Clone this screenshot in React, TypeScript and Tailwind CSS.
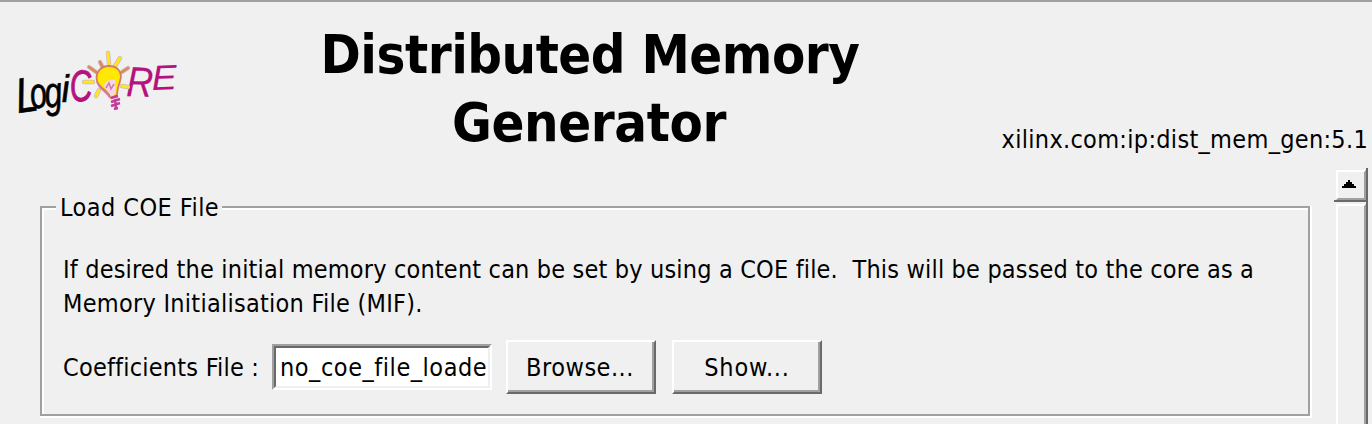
function Logo() {
  return (
    <svg className="block h-[84px] w-[176px]" viewBox="10 44 176 84" role="img" aria-label="LogiCORE">
      <g fontFamily="'Liberation Sans Narrow', 'Liberation Sans', sans-serif" fontStyle="italic">
        <g fill="#000" stroke="#000" strokeWidth=".7">
          <text transform="translate(18 113) rotate(-8) scale(.8 1)" fontSize="49">L</text>
          <text transform="translate(32 109) rotate(-9) scale(.7 1)" fontSize="43">o</text>
          <text transform="translate(46 108) rotate(-7) scale(.74 1)" fontSize="43">g</text>
          <text transform="translate(62 102) rotate(-3) scale(.95 1)" fontSize="38">i</text>
        </g>
        <g fill="#b5127f" stroke="#b5127f">
          <text transform="translate(71 102) rotate(-5) scale(.7 1)" fontSize="44" strokeWidth=".9">C</text>
          <text transform="translate(126 96) rotate(2) scale(.88 1)" fontSize="42" strokeWidth=".2">R</text>
          <text transform="translate(152 90) rotate(-2) scale(1.08 1)" fontSize="35" strokeWidth="0">E</text>
        </g>
      </g>
      <g fill="none" stroke="#cdb9c4" strokeWidth="4.4" strokeLinecap="round">
        <path d="M108 53l1 11M120 58l-5 8M100 62l3 6M89 67l7 5M84 82h9M96 96l3-6M128 68l-6 4M122 86l6 1" />
      </g>
      <g fill="none" stroke="#ffe51a" strokeWidth="3" strokeLinecap="round">
        <path d="M108 53l1 11M120 58l-5 8M84 82h9M96 96l3-6M122 86l6 1" />
        <path d="M100 62l3 6M89 67l7 5M128 68l-6 4" stroke="#dc8a50" strokeWidth="2.4" />
      </g>
      <path d="M97 81c-2-9 4-15 12-15 9 0 14 7 11 15-1 5-3 7-3 14l-6 3c-2-8-12-9-14-17z" fill="#ffe900" stroke="#d97a60" strokeWidth="1.8" />
      <path d="M104 86c1-5 6-7 11-6l1 13-5 4c-1-4-5-6-7-11z" fill="#f5d5e6" />
      <path d="M97 82c2 7 9 9 13 16M106 88l3-5 2 6 3-5" fill="none" stroke="#cf79af" strokeWidth="1.5" />
      <path d="M111 98l7-2M111 102l9-3M111 106l9-3M114 109l4-1M115 99l1 9" stroke="#c23d95" strokeWidth="2.4" fill="none" />
    </svg>
  );
}

function PushButton({ label, text }: { label: string; text: string }) {
  return (
    <button className="h-[54px] w-[150px] border-2 border-t-white border-r-[#696969] border-b-[#696969] border-l-white">
      <span className="flex h-full items-center justify-center border-r-2 border-b-2 border-[#a0a0a0] pt-[3px]">
        <span className={text}>{label}</span>
      </span>
    </button>
  );
}

function ScrollBar() {
  return (
    <div className="flex h-[256px] w-[34px] shrink-0 flex-col">
      <div className="h-[34px] border-r-2 border-b-2 border-[#696969] pt-[2px] pl-[2px]">
        <div className="flex h-full justify-center border-2 border-t-white border-r-[#a0a0a0] border-b-[#a0a0a0] border-l-white pt-[8px] pr-[4px]">
          <svg className="h-[8px] w-[14px] shrink-0" viewBox="0 0 14 8" shapeRendering="crispEdges">
            <path d="M6 0h2v2h2v2h2v2h2v2H0V6h2V4h2V2h2z" />
          </svg>
        </div>
      </div>
      <div className="flex-1 border-r-2 border-[#696969] pt-[2px] pl-[2px]">
        <div className="h-full border-2 border-t-white border-r-[#a0a0a0] border-b-0 border-l-white" />
      </div>
    </div>
  );
}

export default function App() {
  return (
    <div className="h-[424px] w-[1372px] overflow-hidden border-t-2 border-[#a0a0a0] bg-[#f0f0f0] font-['DejaVu_Sans_Condensed','DejaVu_Sans',sans-serif] text-[25px] leading-[34px] whitespace-pre text-black">
      <header className="flex h-[166px]">
        <div className="w-[300px] shrink-0 pt-[42px] pl-[10px]">
          <Logo />
        </div>
        <h1 className="w-[580px] shrink-0 pt-[19px] text-center text-[54px] leading-[68px] font-bold">
          <span className="block tracking-[-0.5px]">Distributed Memory</span>
          <span className="block pr-[2px] tracking-[-0.4px]">Generator</span>
        </h1>
        <p className="flex-1 self-end pr-[4px] pb-[11px] text-right tracking-[0.3px]">xilinx.com:ip:dist_mem_gen:5.1</p>
      </header>

      <main className="flex justify-between pl-[40px]">
        <section className="mt-[38px] h-[210px] w-[1270px] border-2 border-[#a0a0a0] shadow-[2px_0_0_#fff,0_2px_0_#fff,2px_2px_0_#fff,inset_2px_2px_0_#fff]">
          <h2 className="-mt-[17px] ml-[14px] h-[34px] w-[166px] bg-[#f0f0f0] pl-[4px] tracking-[0.45px]">Load COE File</h2>
          <div className="pt-[28px] pl-[21px]">
            <p className="tracking-[0.17px]">If desired the initial memory content can be set by using a COE file.  This will be passed to the core as a</p>
            <p className="tracking-[0.26px]">Memory Initialisation File (MIF).</p>
          </div>
          <div className="flex items-center pt-[19px] pl-[20px]">
            <label className="w-[210px] pt-[2px] pl-px tracking-[0.22px]">Coefficients File :</label>
            <div className="h-[46px] w-[220px] border-2 border-t-[#a0a0a0] border-r-white border-b-white border-l-[#a0a0a0]">
              <div className="h-full overflow-hidden border-2 border-t-[#696969] border-r-[#f0f0f0] border-b-[#f0f0f0] border-l-[#696969] bg-white pt-[3px] pl-[4px] tracking-[0.55px]">
                no_coe_file_loade
              </div>
            </div>
            <div className="ml-[14px] flex gap-[16px]">
              <PushButton label="Browse..." text="tracking-[0.5px]" />
              <PushButton label="Show..." text="pl-[2px] tracking-[0.8px]" />
            </div>
          </div>
        </section>
        <div className="pr-[4px]">
          <ScrollBar />
        </div>
      </main>
    </div>
  );
}
